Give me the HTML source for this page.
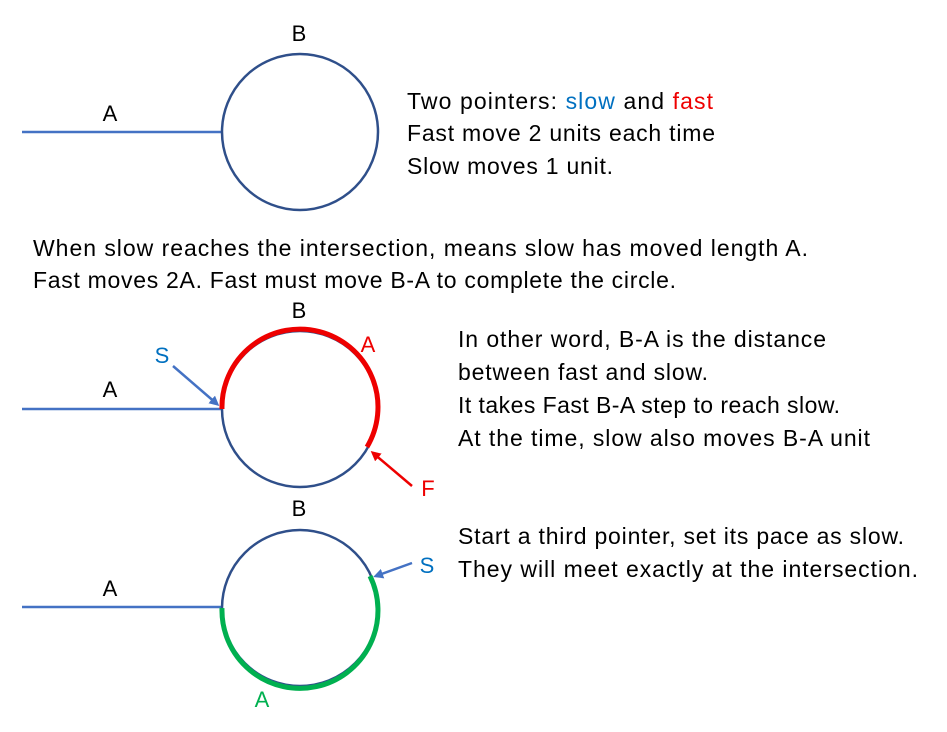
<!DOCTYPE html>
<html><head><style>body{margin:0;background:#fff}svg{display:block}</style></head><body>
<svg width="947" height="732" viewBox="0 0 947 732" xmlns="http://www.w3.org/2000/svg" font-family="Liberation Sans, sans-serif" font-size="23">
<defs>
<marker id="ab" markerWidth="10" markerHeight="10" refX="7" refY="5" orient="auto" markerUnits="userSpaceOnUse"><path d="M0,0 L10,5 L0,10 z" fill="#4472c4"/></marker>
<marker id="ar" markerWidth="10" markerHeight="10" refX="7" refY="5" orient="auto" markerUnits="userSpaceOnUse"><path d="M0,0 L10,5 L0,10 z" fill="#e00"/></marker>
</defs>
<!-- diagram 1 -->
<line x1="22" y1="132" x2="222" y2="132" stroke="#4472c4" stroke-width="2.5"/>
<circle cx="300" cy="132" r="78" fill="none" stroke="#2f4f8a" stroke-width="2.5"/>
<text x="299" y="41" text-anchor="middle" font-size="22">B</text>
<text x="110" y="121" text-anchor="middle" font-size="22">A</text>
<text x="407" y="109" textLength="306">Two pointers: <tspan fill="#0070c0">slow</tspan> and <tspan fill="#e00">fast</tspan></text>
<text x="407" y="141" textLength="308">Fast move 2 units each time</text>
<text x="407" y="174" textLength="206">Slow moves 1 unit.</text>
<text x="33" y="256" textLength="775">When slow reaches the intersection, means slow has moved  length A.</text>
<text x="33" y="288" textLength="643">Fast moves 2A. Fast must move B-A to complete the circle.</text>
<!-- diagram 2 -->
<line x1="22" y1="409" x2="222" y2="409" stroke="#4472c4" stroke-width="2.5"/>
<circle cx="300" cy="409" r="78" fill="none" stroke="#2f4f8a" stroke-width="2.5"/>
<path d="M222,409 A78,78 0 1 1 367,447" fill="none" stroke="#e00" stroke-width="5"/>
<line x1="173" y1="366" x2="217" y2="404" stroke="#4472c4" stroke-width="2.5" marker-end="url(#ab)"/>
<line x1="412" y1="486" x2="373" y2="453" stroke="#e00" stroke-width="2.5" marker-end="url(#ar)"/>
<text x="299" y="318" text-anchor="middle" font-size="22">B</text>
<text x="110" y="397" text-anchor="middle" font-size="22">A</text>
<text x="162" y="363" text-anchor="middle" fill="#0070c0" font-size="22">S</text>
<text x="368" y="352" text-anchor="middle" fill="#e00" font-size="22">A</text>
<text x="428" y="496" text-anchor="middle" fill="#e00" font-size="22">F</text>
<text x="458" y="347" textLength="368">In other word, B-A is the distance</text>
<text x="458" y="380" textLength="250">between fast and slow.</text>
<text x="458" y="413" textLength="382">It takes Fast B-A step to reach slow.</text>
<text x="458" y="446" textLength="412">At the time, slow also moves B-A unit</text>
<!-- diagram 3 -->
<line x1="22" y1="607" x2="222" y2="607" stroke="#4472c4" stroke-width="2.5"/>
<circle cx="300" cy="608" r="78" fill="none" stroke="#2f4f8a" stroke-width="2.5"/>
<path d="M222,608 A78,78 0 1 0 370,576" fill="none" stroke="#00b050" stroke-width="5"/>
<line x1="412" y1="563" x2="376" y2="576" stroke="#4472c4" stroke-width="2.5" marker-end="url(#ab)"/>
<text x="299" y="516" text-anchor="middle" font-size="22">B</text>
<text x="110" y="596" text-anchor="middle" font-size="22">A</text>
<text x="427" y="573" text-anchor="middle" fill="#0070c0" font-size="22">S</text>
<text x="262" y="707" text-anchor="middle" fill="#00b050" font-size="22">A</text>
<text x="458" y="544" textLength="446">Start a third pointer, set its pace as slow.</text>
<text x="458" y="577" textLength="460">They will meet exactly at the intersection.</text>
</svg>
</body></html>
